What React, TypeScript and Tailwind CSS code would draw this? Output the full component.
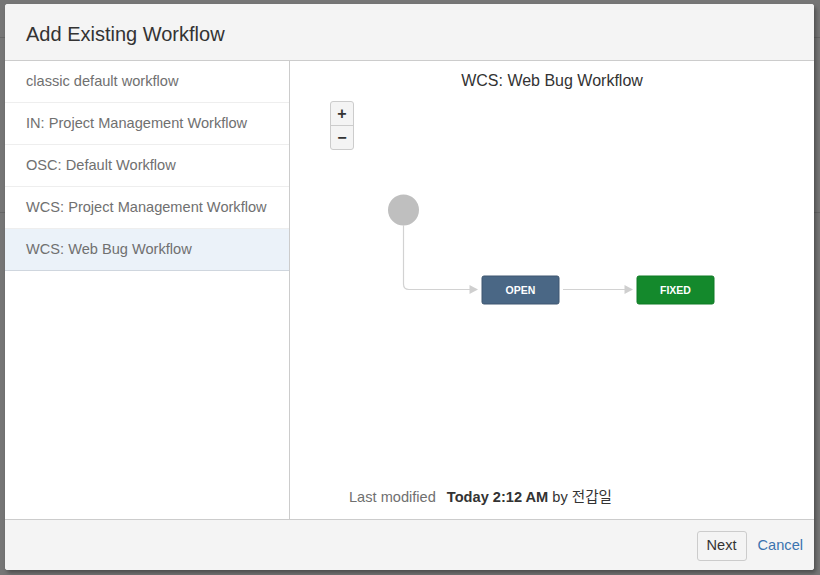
import React from "react";

const workflows = [
  "classic default workflow",
  "IN: Project Management Workflow",
  "OSC: Default Workflow",
  "WCS: Project Management Workflow",
  "WCS: Web Bug Workflow",
];

function Diagram() {
  return (
    <svg width="524" height="395" className="block">
      {/* start -> OPEN */}
      <circle cx="113.5" cy="119" r="15.5" fill="#bfbfbf" />
      <path d="M113.5 134 V193 Q113.5 198.5 119 198.5 H181" fill="none" stroke="#d2d2d2" strokeWidth="1.2" />
      <polygon points="179.5,194 188,198.5 179.5,203" fill="#cfcfcf" />
      <rect x="192" y="185" width="77" height="28" rx="2" fill="#4a6785" stroke="#3e5670" />
      <text x="230.5" y="202.5" textAnchor="middle" fill="#fff" fontSize="10.5" fontWeight="700" fontFamily="'Liberation Sans', Arial, sans-serif">
        OPEN
      </text>
      {/* OPEN -> FIXED */}
      <path d="M273 198.5 H336" fill="none" stroke="#d2d2d2" strokeWidth="1.2" />
      <polygon points="334.5,194 343,198.5 334.5,203" fill="#cfcfcf" />
      <rect x="347" y="185" width="77" height="28" rx="2" fill="#14892c" stroke="#0f7a25" />
      <text x="385.5" y="202.5" textAnchor="middle" fill="#fff" fontSize="10.5" fontWeight="700" fontFamily="'Liberation Sans', Arial, sans-serif">
        FIXED
      </text>
    </svg>
  );
}

export default function App() {
  const selected = 4;
  return (
    <div className="relative w-[820px] h-[575px] bg-[#767676] pt-[4px] pl-[5px] overflow-hidden font-['Liberation_Sans',Arial,sans-serif]">
      {/* page behind the overlay */}
      <div className="absolute left-0 right-0 top-[37px] h-px bg-[#666]" />
      <div className="absolute left-0 right-0 top-[212px] h-px bg-[#666]" />

      <div className="relative flex flex-col w-[809px] h-[566px] bg-white rounded-[3px] shadow-[2px_3px_4px_rgba(0,0,0,0.35)] overflow-hidden">
        {/* Header */}
        <div className="h-[57px] shrink-0 bg-[#f4f4f4] border-b border-[#cccccc] px-[21px] flex items-center">
          <h2 className="text-[20px] leading-[30px] text-[#333] pt-[3px]">Add Existing Workflow</h2>
        </div>

        {/* Body */}
        <div className="flex flex-1 min-h-0">
          <ul className="w-[285px] shrink-0 border-r border-[#cccccc]">
            {workflows.map((w, i) => (
              <li
                key={w}
                className={
                  "h-[42px] flex items-center px-[21px] text-[14.6px] text-[#707070] border-b " +
                  (i === selected ? "bg-[#ebf2f9] border-[#cfd6de]" : "border-[#eeeeee]")
                }
              >
                {w}
              </li>
            ))}
          </ul>

          <div className="flex-1 flex flex-col">
            <div className="pt-[10px] text-center text-[16px] leading-[20px] text-[#333]">WCS: Web Bug Workflow</div>
            <div className="relative flex-1">
              <Diagram />
              <div className="absolute left-[40px] top-[10px] w-[24px] flex flex-col rounded-[3px] border border-[#cccccc] bg-[#f4f4f4] overflow-hidden">
                <button className="h-[24px] flex items-center justify-center text-[16px] font-bold text-[#333] border-b border-[#cccccc]">+</button>
                <button className="h-[23px] flex items-center justify-center text-[16px] font-bold text-[#333]">−</button>
              </div>
            </div>
            <div className="pl-[59px] pb-[13px] text-[14.6px] leading-[20px] text-[#707070]">
              Last modified <span className="ml-[7px] font-bold text-[#333]">Today 2:12 AM</span>{" "}
              <span className="text-[#333]">by <span className="font-['Noto_Sans_CJK_KR',sans-serif]">전갑일</span></span>
            </div>
          </div>
        </div>

        {/* Footer */}
        <div className="h-[51px] shrink-0 bg-[#f4f4f4] border-t border-[#cccccc] flex items-center justify-end gap-[11px] pr-[11px] pt-[2px]">
          <button className="h-[30px] w-[50px] rounded-[3px] border border-[#cccccc] bg-[#f4f4f4] text-[14.6px] text-[#333]">Next</button>
          <a className="text-[14.6px] text-[#3b73af]">Cancel</a>
        </div>
      </div>
    </div>
  );
}
